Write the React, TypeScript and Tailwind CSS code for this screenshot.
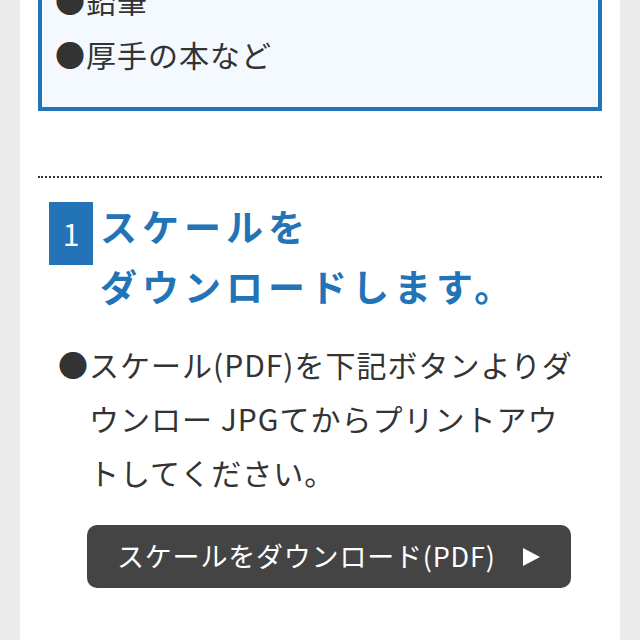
import React from 'react';

const jp = { fontFamily: '"Noto Sans CJK JP", "Noto Sans", sans-serif' };

const items = ['鉛筆', '厚手の本など'];

export default function App() {
  return (
    <div className="h-[640px] overflow-hidden bg-[#ebebeb] px-[20px]" style={jp}>
      <div className="flow-root h-full bg-white px-[18px] text-[#333]">
        {/* Things to prepare */}
        <div className="-mt-[51px] border-4 border-[#2374b7] bg-[#f3f9fe] px-[13px] pt-[20px] pb-[26px]">
          {items.map((item) => (
            <div key={item} className="flex text-[30px] leading-[54px] tracking-[1px]">
              <span>●</span>
              <span>{item}</span>
            </div>
          ))}
        </div>

        <div className="mt-[65px] border-t-2 border-dotted border-[#333]" />

        {/* Step 1 */}
        <div className="mt-[18px] flex">
          <div className="mt-[6px] ml-[11px] flex h-[63px] w-[44px] shrink-0 items-center justify-center bg-[#2374b7] text-[30px] text-white">
            1
          </div>
          <h2 className="ml-[7px] text-[37px] font-bold leading-[60px] tracking-[5px] text-[#2374b7]">
            スケールを
            <br />
            ダウンロードします。
          </h2>
        </div>

        <div className="mt-[21px] ml-[20px] flex text-[30px] leading-[54px] tracking-[1px]">
          <span className="shrink-0">●</span>
          <p className="whitespace-nowrap">
            スケール(PDF)を下記ボタンよりダ
            <br />
            ウンロー JPGてからプリントアウ
            <br />
            トしてください。
          </p>
        </div>

        <button className="mt-[26px] ml-[49px] flex h-[63px] w-[484px] items-center justify-between rounded-[10px] bg-[#444] pr-[31px] pl-[30px] text-[27px] tracking-[0.8px] text-white">
          <span>スケールをダウンロード(PDF)</span>
          <svg width="17" height="18" viewBox="0 0 17 18">
            <path d="M0 0 L17 9 L0 18 Z" fill="#fff" />
          </svg>
        </button>
      </div>
    </div>
  );
}
